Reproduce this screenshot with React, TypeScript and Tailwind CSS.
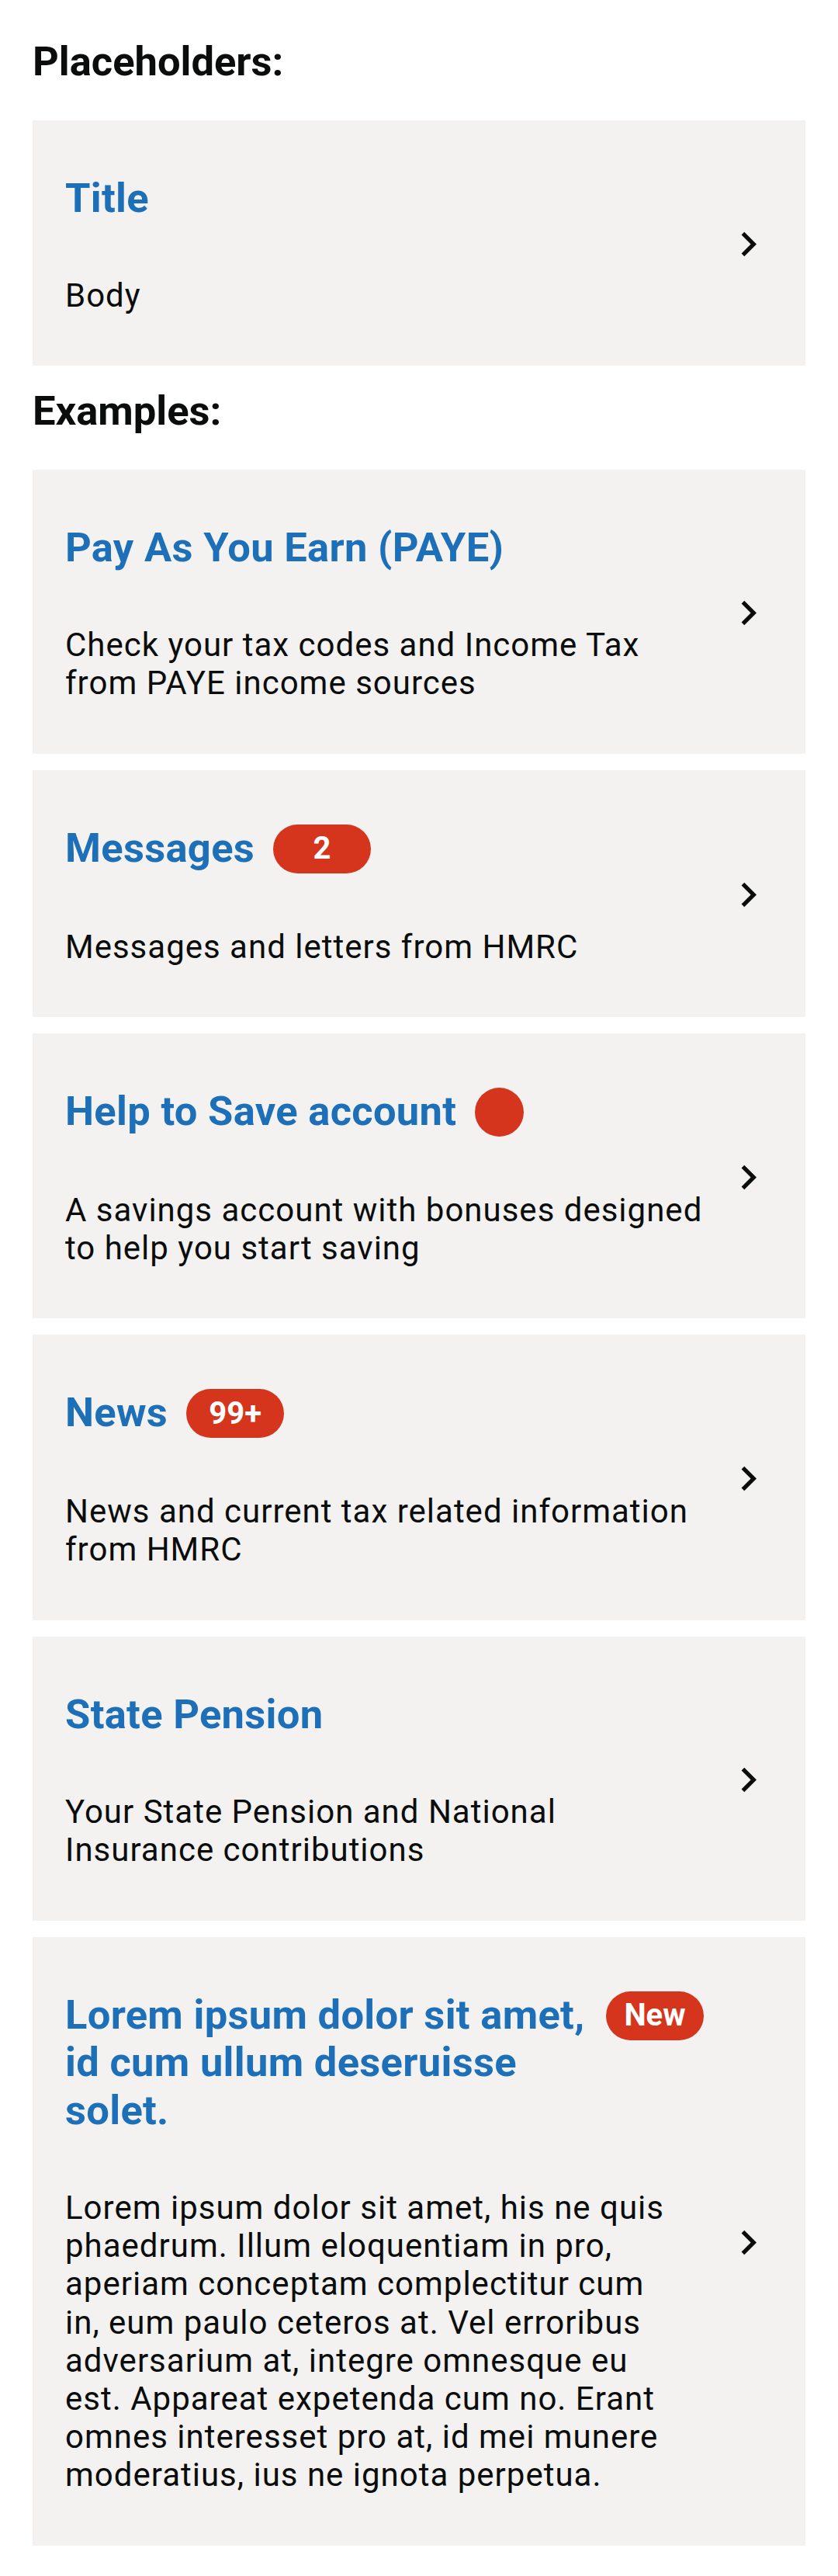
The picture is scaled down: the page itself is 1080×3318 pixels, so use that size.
import React from 'react'

interface TileProps {
  title: string
  body: string
  badge?: string
  dot?: boolean
  narrow?: boolean
}

const Chevron = () => (
  <svg
    width="63"
    height="63"
    viewBox="0 0 24 24"
    className="ml-[26px] shrink-0"
    fill="#0b0c0c"
  >
    <path d="M10 6 8.59 7.41 13.17 12l-4.58 4.59L10 18l6-6z" />
  </svg>
)

const Tile = ({ title, body, badge, dot, narrow }: TileProps) => (
  <div className="flex items-center bg-[#f3f2f1] pt-[70px] pb-[66px] pl-[42px] pr-[42px]">
    <div className="flex min-w-0 flex-1 flex-col gap-[70px]">
      <div className="flex items-start gap-[24px]">
        <span className="min-w-0 text-[52.5px] font-bold leading-[61.5px] tracking-[0.3px] text-[#1d70b8]">
          {title}
        </span>
        {badge && (
          <span className="flex h-[63px] w-[126px] shrink-0 items-center justify-center rounded-full bg-[#d4351c] text-[40px] font-bold text-white">
            {badge}
          </span>
        )}
        {dot && <span className="h-[63px] w-[63px] shrink-0 rounded-full bg-[#d4351c]" />}
      </div>
      <p
        className={
          narrow
            ? 'max-w-[790px] text-[42px] leading-[49.2px] tracking-[1px] text-[#0b0c0c]'
            : 'text-[42px] leading-[49.2px] tracking-[1px] text-[#0b0c0c]'
        }
      >
        {body}
      </p>
    </div>
    <Chevron />
  </div>
)

const examples: TileProps[] = [
  {
    title: 'Pay As You Earn (PAYE)',
    body: 'Check your tax codes and Income Tax from PAYE income sources',
  },
  { title: 'Messages', body: 'Messages and letters from HMRC', badge: '2' },
  {
    title: 'Help to Save account',
    body: 'A savings account with bonuses designed to help you start saving',
    dot: true,
  },
  {
    title: 'News',
    body: 'News and current tax related information from HMRC',
    badge: '99+',
  },
  {
    title: 'State Pension',
    body: 'Your State Pension and National Insurance contributions',
  },
  {
    title: 'Lorem ipsum dolor sit amet, id cum ullum deseruisse solet.',
    body: 'Lorem ipsum dolor sit amet, his ne quis phaedrum. Illum eloquentiam in pro, aperiam conceptam complectitur cum in, eum paulo ceteros at. Vel erroribus adversarium at, integre omnesque eu est. Appareat expetenda cum no. Erant omnes interesset pro at, id mei munere moderatius, ius ne ignota perpetua.',
    badge: 'New',
    narrow: true,
  },
]

export default function App() {
  return (
    <div className="min-h-screen bg-white px-[42px] pt-[49px] pb-[43px] font-['Roboto',sans-serif]">
      <h2 className="text-[52.5px] font-bold leading-[61.5px] text-[#0b0c0c]">Placeholders:</h2>
      <div className="mt-[44px]">
        <Tile title="Title" body="Body" />
      </div>
      <h2 className="mt-[28px] text-[52.5px] font-bold leading-[61.5px] text-[#0b0c0c]">
        Examples:
      </h2>
      <div className="mt-[44px] flex flex-col gap-[21px]">
        {examples.map((item) => (
          <Tile key={item.title} {...item} />
        ))}
      </div>
    </div>
  )
}
